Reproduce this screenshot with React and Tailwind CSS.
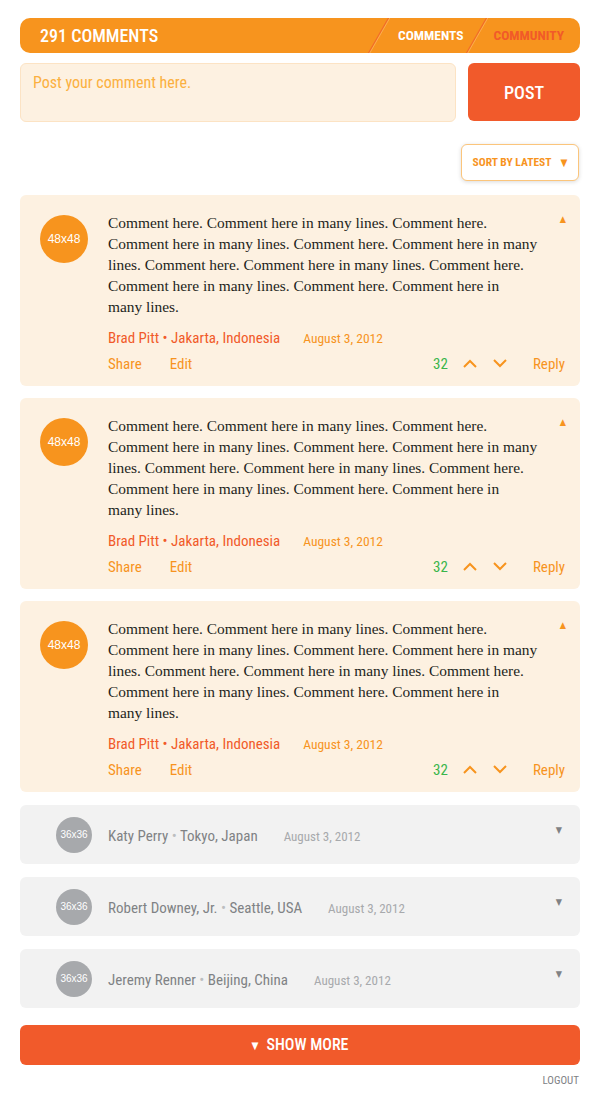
import { useState } from 'react';

const cond = { fontFamily: '"Liberation Sans Narrow", "Roboto Condensed", "DejaVu Sans Condensed", "Liberation Sans", sans-serif' };

const lines = [
  'Comment here. Comment here in many lines. Comment here.',
  'Comment here in many lines. Comment here. Comment here in many',
  'lines. Comment here. Comment here in many lines. Comment here.',
  'Comment here in many lines. Comment here. Comment here in',
  'many lines.',
];

const collapsed = [
  { name: 'Katy Perry', place: 'Tokyo, Japan' },
  { name: 'Robert Downey, Jr.', place: 'Seattle, USA' },
  { name: 'Jeremy Renner', place: 'Beijing, China' },
];

const Slash = () => (
  <svg width="22" height="35" viewBox="0 0 22 35" className="shrink-0">
    <line x1="0.5" y1="35" x2="20.5" y2="0" stroke="#F26B2A" strokeWidth="1.2" />
    <line x1="1.8" y1="35" x2="21.8" y2="0" stroke="#FBB45E" strokeWidth="0.8" />
  </svg>
);

const Chevron = ({ up }) => (
  <svg width="14" height="9" viewBox="0 0 14 9">
    <polyline
      points={up ? '1,8 7,2 13,8' : '1,1 7,7 13,1'}
      fill="none"
      stroke="#F7941E"
      strokeWidth="2"
    />
  </svg>
);

const OpenComment = () => (
  <div className="flex h-[191px] rounded-md bg-[#FDF1E1] pt-[17px] pl-5 pr-[14px]">
    <div className="mt-[3px] flex h-12 w-12 shrink-0 items-center justify-center rounded-full bg-[#F7941E] text-[12px] text-white" style={{ fontFamily: '"Liberation Sans", Arial, sans-serif' }}>
      48x48
    </div>
    <div className="ml-5 flex-1">
      <div className="flex">
        <p className="text-[15.4px] leading-[21px] whitespace-nowrap text-[#231F20]" style={{ fontFamily: '"Liberation Serif", Georgia, serif' }}>
          {lines.map((l, i) => (
            <span key={i} className="block">{l}</span>
          ))}
        </p>
        <div className="ml-auto pt-[3px] text-[9px] leading-none text-[#F7941E]">▲</div>
      </div>
      <div className="mt-[10px] flex items-baseline" style={cond}>
        <span className="text-[15px] text-[#F15A29]">Brad Pitt • Jakarta, Indonesia</span>
        <span className="ml-[23px] text-[13.5px] text-[#F7941E]">August 3, 2012</span>
      </div>
      <div className="mt-[3px] flex items-center text-[15px] text-[#F7941E]" style={cond}>
        <span>Share</span>
        <span className="ml-[28px]">Edit</span>
        <span className="ml-auto text-[#39B54A]">32</span>
        <span className="ml-[15px] flex"><Chevron up /></span>
        <span className="ml-[16px] flex"><Chevron /></span>
        <span className="ml-[26px] mr-[1px]">Reply</span>
      </div>
    </div>
  </div>
);

const ClosedComment = ({ name, place }) => (
  <div className="flex h-[59px] items-center rounded-md bg-[#F2F2F2] pl-9 pr-[18px]">
    <div className="flex h-9 w-9 shrink-0 items-center justify-center rounded-full bg-[#A7A9AC] text-[10px] text-white" style={{ fontFamily: '"Liberation Sans", Arial, sans-serif' }}>
      36x36
    </div>
    <div className="ml-4 mt-[3px] flex items-baseline" style={cond}>
      <span className="text-[15px] text-[#808285]">
        {name} <span className="text-[#BCBEC0]">•</span> {place}
      </span>
      <span className="ml-[26px] text-[13px] text-[#A7A9AC]">August 3, 2012</span>
    </div>
    <div className="ml-auto -mt-2 text-[9px] text-[#808285]">▼</div>
  </div>
);

export default function App() {
  const [text, setText] = useState('');

  return (
    <div className="min-h-screen w-[600px] bg-white px-5 pt-[18px]" style={cond}>
      <div className="flex h-[35px] items-center rounded-[10px] bg-[#F7941E] pl-5 pr-[16px]">
        <span className="text-[18px] font-medium text-white">291 COMMENTS</span>
        <div className="ml-auto flex h-full items-center">
          <Slash />
          <span className="ml-[8px] mr-[2px] text-[13.5px] font-bold text-white">COMMENTS</span>
          <Slash />
          <span className="ml-[6px] text-[13.5px] font-bold text-[#F15A29]">COMMUNITY</span>
        </div>
      </div>

      <div className="mt-[10px] flex gap-3">
        <textarea
          value={text}
          onChange={(e) => setText(e.target.value)}
          placeholder="Post your comment here."
          className="h-[59px] flex-1 resize-none rounded-md border border-[#FCE3C4] bg-[#FDF1E1] px-3 py-[7px] text-[16px] text-[#F7941E] outline-none placeholder:text-[#FBB040]"
          style={cond}
        />
        <button className="h-[58px] w-[112px] rounded-md bg-[#F15A2B] text-[18px] font-medium text-white">POST</button>
      </div>

      <div className="mt-[22px] flex justify-end">
        <button className="mr-[1px] flex h-[37px] w-[118px] items-center justify-center gap-[9px] rounded-md border border-[#FBC57C] bg-white text-[11.5px] font-bold text-[#F7941E] shadow-[0_1px_4px_rgba(0,0,0,0.15)]">
          SORT BY LATEST <span className="text-[10px]">▼</span>
        </button>
      </div>

      <div className="mt-[14px] flex flex-col gap-3">
        <OpenComment />
        <OpenComment />
        <OpenComment />
        <div className="mt-[1px] flex flex-col gap-[13px]">
          {collapsed.map((c) => (
            <ClosedComment key={c.name} {...c} />
          ))}
        </div>
      </div>

      <button className="mt-[17px] flex h-10 w-full items-center justify-center gap-2 rounded-md bg-[#F15A2B] text-[16px] font-medium text-white">
        <span className="text-[10px]">▼</span> SHOW MORE
      </button>
      <div className="mt-[8px] pr-[1px] text-right text-[11px] text-[#808285]">LOGOUT</div>
    </div>
  );
}
